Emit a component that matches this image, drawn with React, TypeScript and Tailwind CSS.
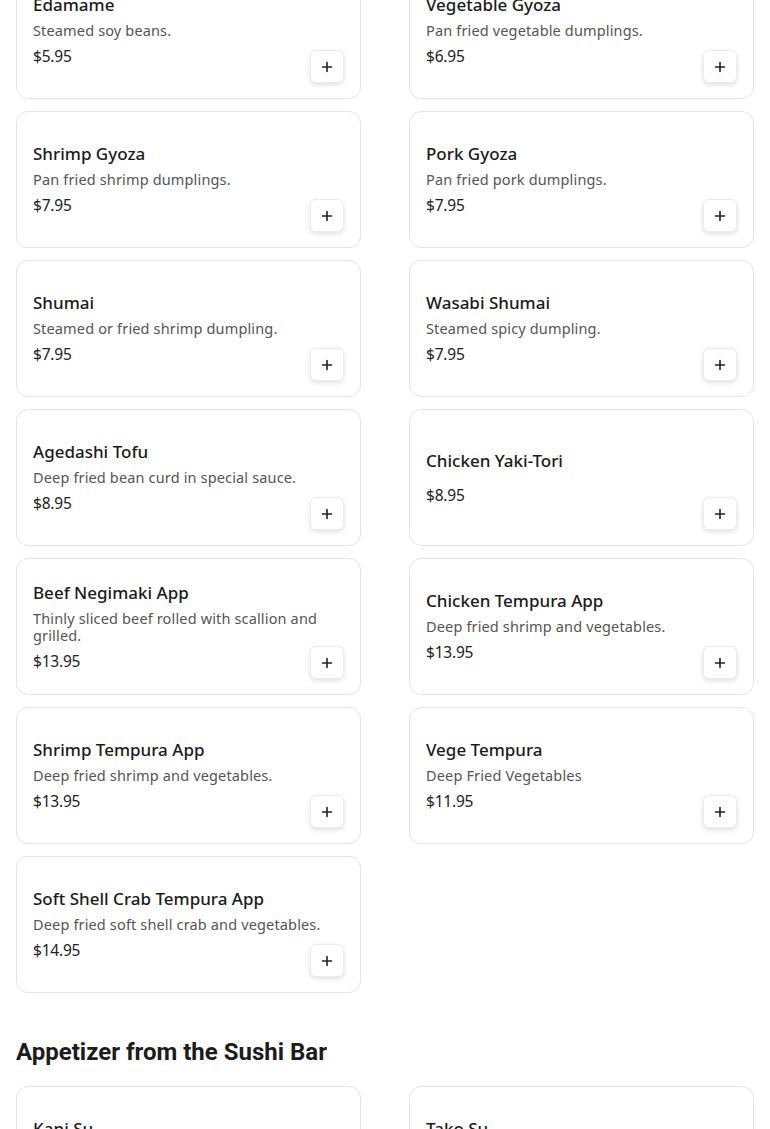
import React from "react";

type Item = { name: string; desc?: string; price: string };

const items: Item[] = [
  { name: "Edamame", desc: "Steamed soy beans.", price: "$5.95" },
  { name: "Vegetable Gyoza", desc: "Pan fried vegetable dumplings.", price: "$6.95" },
  { name: "Shrimp Gyoza", desc: "Pan fried shrimp dumplings.", price: "$7.95" },
  { name: "Pork Gyoza", desc: "Pan fried pork dumplings.", price: "$7.95" },
  { name: "Shumai", desc: "Steamed or fried shrimp dumpling.", price: "$7.95" },
  { name: "Wasabi Shumai", desc: "Steamed spicy dumpling.", price: "$7.95" },
  { name: "Agedashi Tofu", desc: "Deep fried bean curd in special sauce.", price: "$8.95" },
  { name: "Chicken Yaki-Tori", price: "$8.95" },
  { name: "Beef Negimaki App", desc: "Thinly sliced beef rolled with scallion and grilled.", price: "$13.95" },
  { name: "Chicken Tempura App", desc: "Deep fried shrimp and vegetables.", price: "$13.95" },
  { name: "Shrimp Tempura App", desc: "Deep fried shrimp and vegetables.", price: "$13.95" },
  { name: "Vege Tempura", desc: "Deep Fried Vegetables", price: "$11.95" },
  { name: "Soft Shell Crab Tempura App", desc: "Deep fried soft shell crab and vegetables.", price: "$14.95" },
];

const sushi: Item[] = [
  { name: "Kani Su", desc: "Crab stick and cucumber in vinegar sauce.", price: "$8.95" },
  { name: "Tako Su", desc: "Octopus and cucumber in vinegar sauce.", price: "$9.95" },
];

function Plus() {
  return (
    <svg width="12" height="12" viewBox="0 0 12 12" fill="none">
      <path d="M6 1.5v9M1.5 6h9" stroke="#222" strokeWidth="1.6" strokeLinecap="round" />
    </svg>
  );
}

function Card({ item }: { item: Item }) {
  return (
    <div className="relative flex items-center rounded-xl border border-[#e4e4e4] bg-white px-4 py-4 min-h-[137px]">
      <div className="flex flex-col">
        <div className="text-[17px] leading-6 font-medium text-[#1b1b1b]">{item.name}</div>
        <div className="mt-[5px] text-[14.5px] leading-[17px] tracking-[0.15px] text-[#555]">{item.desc}</div>
        <div className="mt-[5px] text-[15.5px] leading-6 tracking-[-0.2px] text-[#222]">{item.price}</div>
      </div>
      <button className="absolute right-4 bottom-[15px] flex h-[33px] w-[34px] items-center justify-center rounded-md border border-[#ececec] bg-white shadow-[0_2px_5px_rgba(0,0,0,0.12)]">
        <Plus />
      </button>
    </div>
  );
}

export default function App() {
  return (
    <div className="min-h-screen bg-white px-4" style={{ fontFamily: "'Noto Sans', sans-serif" }}>
      <div className="-mt-[38px] grid grid-cols-2 gap-x-12 gap-y-3">
        {items.map((it) => (
          <Card key={it.name} item={it} />
        ))}
      </div>
      <h2
        className="mt-[43px] mb-[18px] text-[24px] leading-8 font-bold text-[#1c1c1c]"
        style={{ fontFamily: "Roboto, 'Liberation Sans', sans-serif" }}
      >
        Appetizer from the Sushi Bar
      </h2>
      <div className="grid grid-cols-2 gap-x-12 gap-y-3 pb-8">
        {sushi.map((it) => (
          <Card key={it.name} item={it} />
        ))}
      </div>
    </div>
  );
}
